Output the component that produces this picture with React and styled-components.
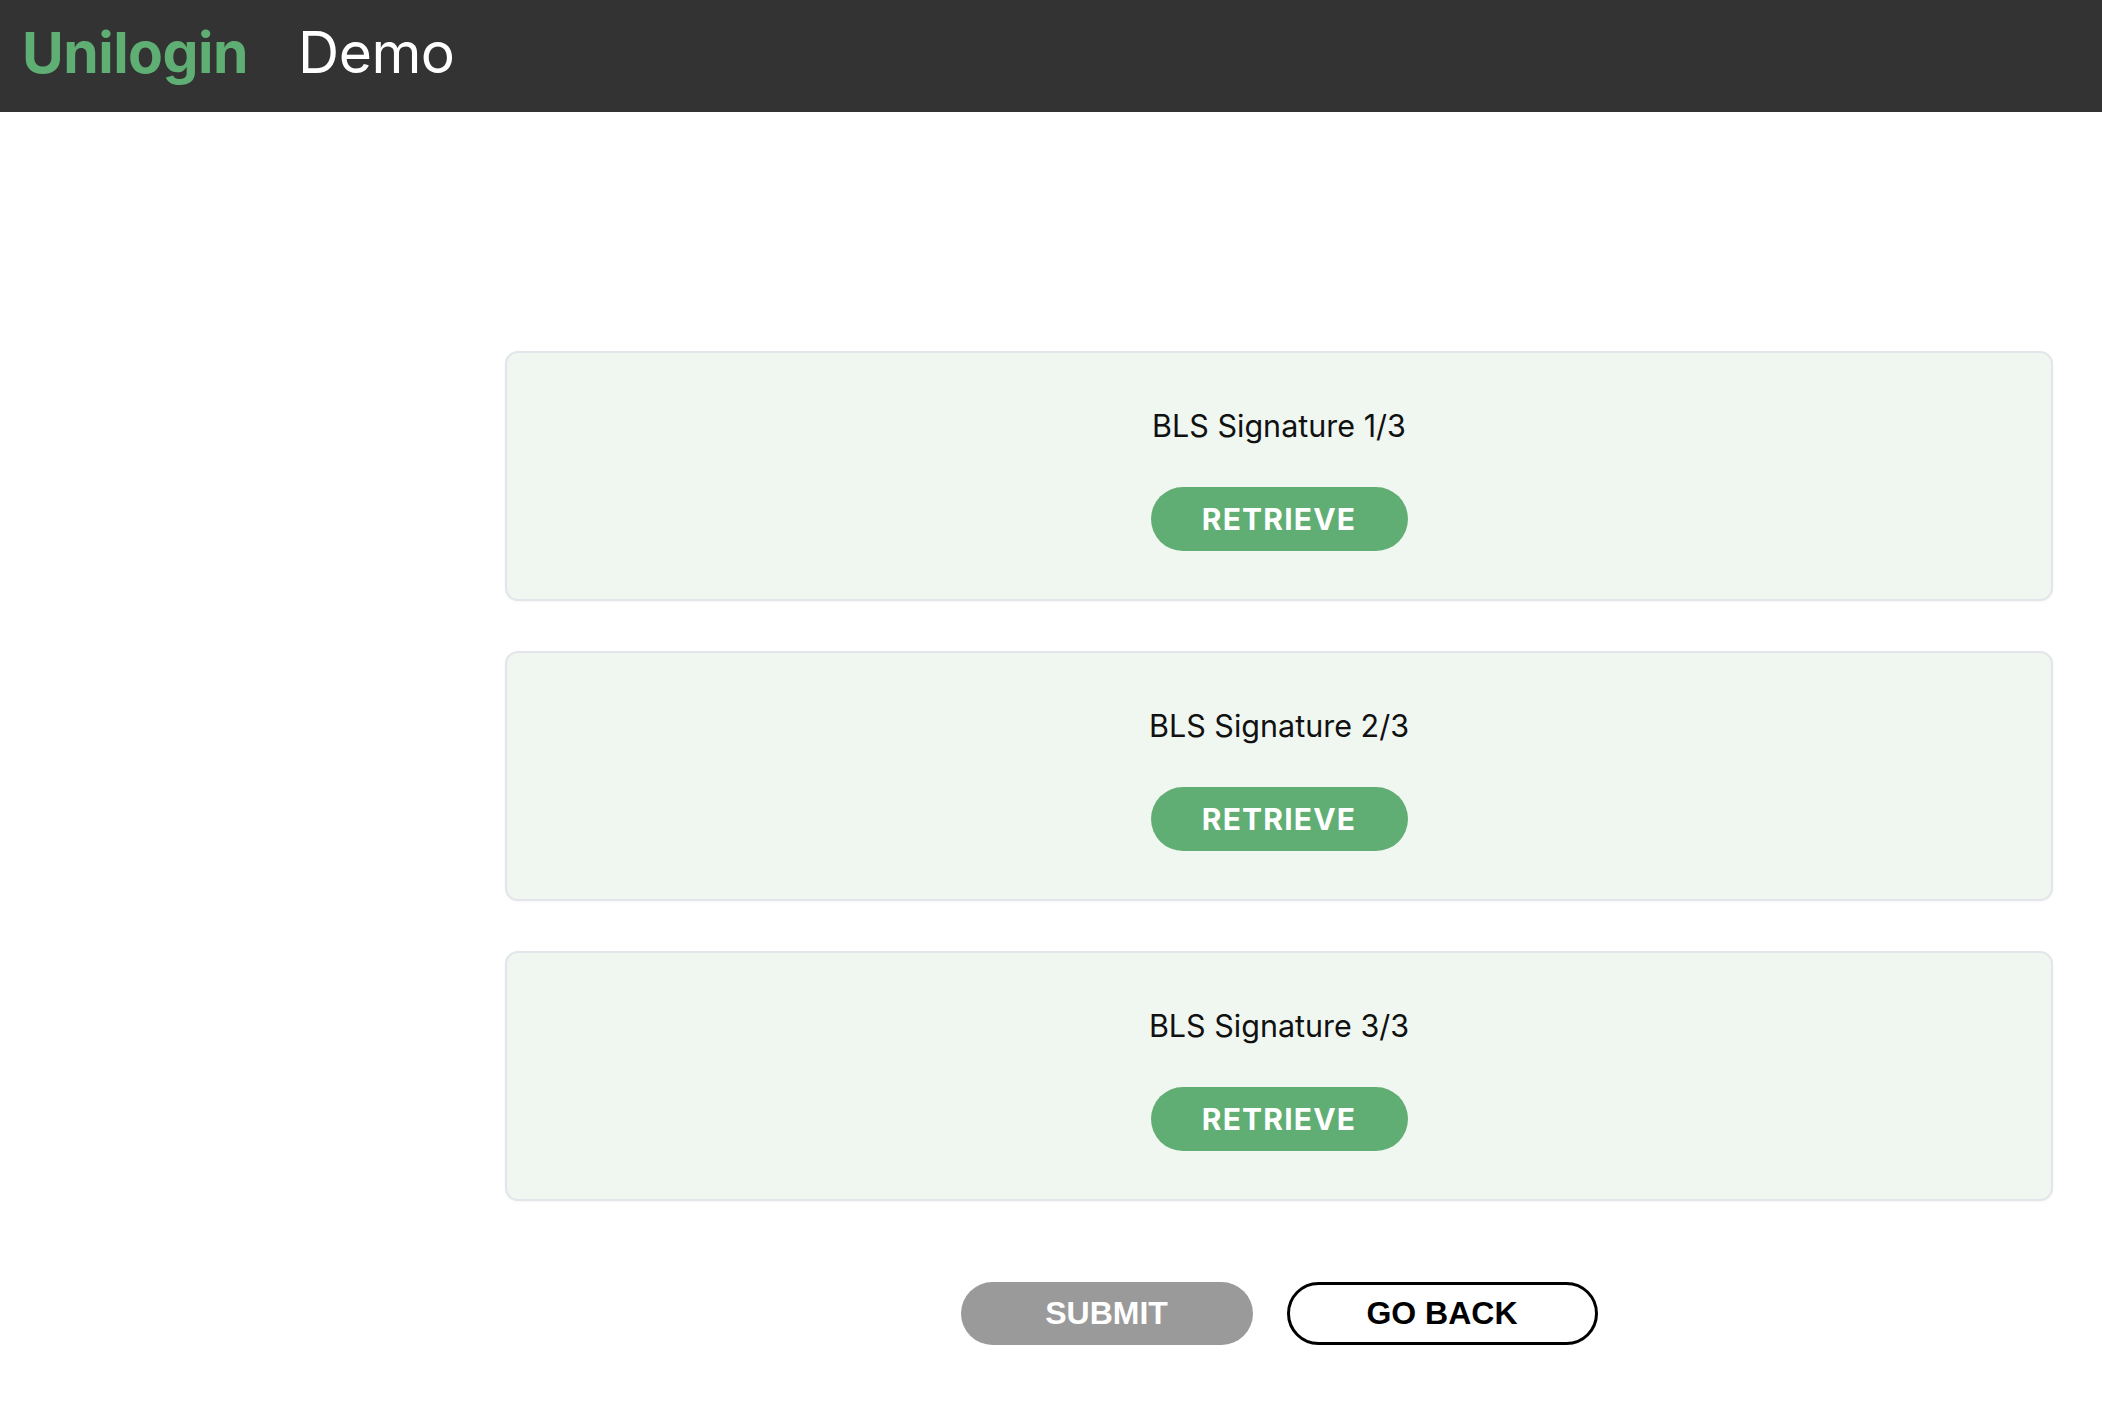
import React from 'react'
import styled, { createGlobalStyle } from 'styled-components'

const GlobalStyle = createGlobalStyle`
    body {
        margin: 0;
        background: #ffffff;
        font-family: Inter, "Noto Sans", sans-serif;
    }
`

const Header = styled.header`
    display: flex;
    align-items: center;
    gap: 50px;
    height: 112px;
    padding-left: 22px;
    background-color: #333333;
    box-sizing: border-box;
`
const Brand = styled.span`
    font-family: Inter, sans-serif;
    font-size: 57px;
    font-weight: ${props => (props.$bold ? 700 : 400)};
    color: ${props => (props.$bold ? '#5fae74' : '#ffffff')};
    letter-spacing: -0.5px;
    margin-top: -8px;
`
const Main = styled.main`
    display: flex;
    flex-direction: column;
    gap: 50px;
    padding: 239px 49px 60px 505px;
`
const Card = styled.section`
    display: flex;
    flex-direction: column;
    align-items: center;
    height: 250px;
    padding-top: 55px;
    box-sizing: border-box;
    background-color: #f0f7f1;
    border: 2px solid #e4e5ea;
    border-radius: 13px;
    box-shadow: 0 1px 3px rgba(0, 0, 0, 0.04);
`
const Title = styled.p`
    margin: 0;
    font-size: 30.5px;
    color: #111111;
    line-height: 36px;
`
const RetrieveButton = styled.button`
    margin-top: 43px;
    width: 257px;
    height: 64px;
    border: none;
    border-radius: 32px;
    background-color: #61ae75;
    color: #ffffff;
    font-family: Inter, sans-serif;
    font-size: 30px;
    font-weight: 700;
    letter-spacing: 1.2px;
    cursor: pointer;
`
const ButtonRow = styled.div`
    display: flex;
    justify-content: center;
    gap: 34px;
    margin-top: 31px;
`
const ActionButton = styled.button`
    width: ${props => props.$width}px;
    height: 63px;
    border-radius: 32px;
    box-sizing: border-box;
    font-family: "Liberation Sans", Arial, sans-serif;
    font-size: 32px;
    font-weight: 700;
    cursor: pointer;
    border: ${props => (props.$outline ? '3px solid #000000' : 'none')};
    background-color: ${props => (props.$outline ? '#ffffff' : '#9b9a9a')};
    color: ${props => (props.$outline ? '#000000' : '#ffffff')};
`

const signatures = [1, 2, 3]

const App = () => {
  return (
    <>
      <GlobalStyle />
      <Header>
        <Brand $bold>Unilogin</Brand>
        <Brand>Demo</Brand>
      </Header>
      <Main>
        {signatures.map(n => (
          <Card key={n}>
            <Title>BLS Signature {n}/3</Title>
            <RetrieveButton>RETRIEVE</RetrieveButton>
          </Card>
        ))}
        <ButtonRow>
          <ActionButton $width={292} disabled>SUBMIT</ActionButton>
          <ActionButton $width={311} $outline>GO BACK</ActionButton>
        </ButtonRow>
      </Main>
    </>
  )
}

export default App
